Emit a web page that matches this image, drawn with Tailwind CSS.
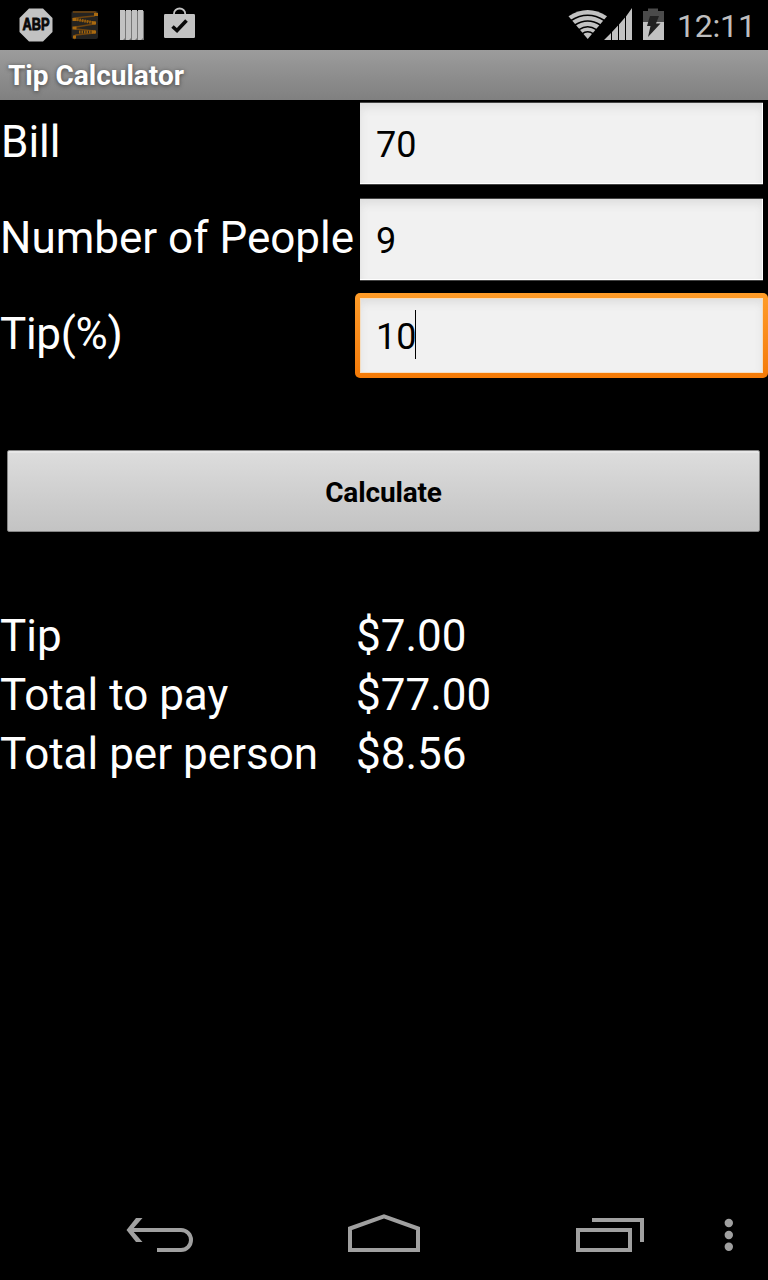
<!DOCTYPE html>
<html lang="en">
<head>
<meta charset="utf-8">
<title>Tip Calculator</title>
<script src="https://cdn.jsdelivr.net/npm/@tailwindcss/browser@4"></script>
</head>
<body class="bg-black">
<div class="flex h-[1280px] w-[768px] flex-col overflow-hidden bg-black font-['Roboto',sans-serif] text-white">
  <header class="h-[50px] shrink-0 flex">
    <svg class="h-[50px] w-[660px] shrink-0" viewBox="0 0 660 50" overflow="visible">
      <path d="M29 8.500H43L52.500 18V32L43 41.500H29L19.500 32V18Z" fill="#c2c2c2"/>
      <text x="36" y="30.300" text-anchor="middle" font-family="Liberation Sans, sans-serif" font-weight="bold" font-size="16" textLength="27" lengthAdjust="spacingAndGlyphs" fill="#080808" stroke="#080808" stroke-width=".9">ABP</text>
      <rect x="71.500" y="11" width="26.500" height="28" rx="2" fill="#242321"/>
      <g fill="none" stroke="#70450f" stroke-width="1.500">
        <path d="M73 12H95Q98 14 94 16L75 18Q71 19 76 20L94 22Q97 23 94 24L76 27Q71 28 76 29L94 31Q97 32 94 33L76 35Q73 36 75 39"/>
        <path d="M77 19.500L95 23M79 32L95 32" stroke="#99600e" stroke-width="3" stroke-dasharray="1.500 1"/>
        <path d="M94 14.500h4M72.500 19.500h4M92 23h4M72.500 28h4M92 32h4M73 37h3" stroke="#a96a10" stroke-width="3"/>
      </g>
      <g fill="#777"><path d="M121 11h5v29h-5zM127 11h5v29h-5zM133 11h5v29h-5zM139 11h5v29h-5z"/></g>
      <path d="M120 10h5v28l-2 2h-3zM126 10h5v28l-2 2h-3zM132 10h5v28l-2 2h-3zM138 10h5v28l-2 2h-3z" fill="#c2c2c2"/>
      <path d="M174 15V13.500a5.600 5 0 0 1 11.200 0V15" fill="none" stroke="#c2c2c2" stroke-width="1.800"/>
      <rect x="164" y="14" width="31" height="24" rx="1.200" fill="#c2c2c2"/>
      <path d="M172.500 26.500L177 30.500L186.500 20.500" fill="none" stroke="#080808" stroke-width="3.600"/>
      <path d="M568.500 16.300Q587.700 3.500 607 16.300L587.700 39Z" fill="#c2c2c2"/>
      <g fill="none" stroke="#000" stroke-width="1.500"><path d="M571 20.500Q587.700 9.800 604.400 20.500"/><path d="M575 25Q587.700 17 600.400 25"/><path d="M579 29.700Q587.700 24 596.400 29.700"/><path d="M582 33.800Q587.700 29.800 593.400 33.800"/></g>
      <path d="M604 40L611 33V40ZM612 32L618 25.500V40H612ZM619 24.500L625 17.500V40H619ZM626 16.500L632 8V40H626Z" fill="#c2c2c2"/>
      <path d="M643 11h5V8.500h10V11h6V22H643Z" fill="#4b4b4b"/>
      <path d="M643 22h21v18H643Z" fill="#c2c2c2"/>
      <path d="M650 16h9l-3 7.500h4.500L648 37l2.500-11H647Z" fill="#222"/>
    </svg>
    <div class="ml-[17px] h-[50px] whitespace-nowrap text-[32px] leading-[52px] tracking-[-0.2px] text-[#bebebe]">12:11</div>
  </header>
  <div class="h-[50px] shrink-0 bg-linear-to-b from-[#9c9c9c] to-[#808080] pl-2 text-[28px] leading-[51px] font-bold [text-shadow:0_1px_4px_#444]"><span>Tip Calculator</span></div>

  <main class="flex flex-1 flex-col">
    <div class="grid h-[290px] shrink-0 grid-cols-[355px_413px]">
      <div class="flex flex-col text-[44px] whitespace-nowrap">
        <div class="h-[90px] pl-px leading-[84px]">Bill</div>
        <div class="h-[96px] leading-[96px]">Number of People</div>
        <div class="h-[96px] leading-[96px] tracking-[-0.3px]">Tip(%)</div>
      </div>
      <div class="flex flex-col pt-[2px] text-[36px] text-black">
        <div class="mr-[5px] mb-[13px] ml-[5px] h-[83px] border-t border-b border-[#444] bg-[#f1f1f1] pl-[16px] leading-[85px] shadow-[inset_-1px_-1px_0_#fff,inset_0_5px_8px_#dedede]">70</div>
        <div class="mr-[5px] mb-[12px] ml-[5px] h-[83px] border-t border-b border-[#444] bg-[#f1f1f1] pl-[16px] leading-[85px] shadow-[inset_-1px_-1px_0_#fff,inset_0_5px_8px_#dedede]">9</div>
        <div class="h-[85px] rounded-[5px] bg-linear-to-b from-[#ff9c28] to-[#f47a06] p-[5px]">
          <div class="flex h-[75px] items-start bg-[#f1f1f1] pl-[16px] shadow-[inset_0_0_0_1px_#f5dec2,inset_0_5px_8px_#dedede]">
            <span class="leading-[78px]">10</span><span class="mt-[12px] -ml-px h-[49px] w-px bg-black"></span>
          </div>
        </div>
      </div>
    </div>
    <button class="mr-[8px] ml-[7px] mt-[60px] h-[82px] shrink-0 rounded-[2px] border border-[#858585] bg-linear-to-b from-[#dddddd] to-[#c3c3c3] pt-[3px] text-[28px] leading-[77px] font-bold tracking-[-0.15px] text-black shadow-[inset_0_2px_0_#e7e7e7]">Calculate</button>
    <div class="mt-[75px] grid grid-cols-[355px_1fr] text-[44px] leading-[59px] whitespace-nowrap">
      <span>Tip</span><span class="pl-px">$7.00</span>
      <span>Total to pay</span><span class="pl-px">$77.00</span>
      <span>Total per person</span><span class="pl-px">$8.56</span>
    </div>
  </main>

  <nav class="h-[96px] shrink-0">
    <svg class="h-[96px] w-[768px]" viewBox="0 1184 768 96" fill="none" stroke="#a0a0a0" stroke-width="4">
      <path d="M130 1230H181A10 10 0 0 1 181 1250H157"/><path d="M136 1218H142.500L132 1230L142.500 1242H136L126.500 1230Z" fill="#a0a0a0" stroke="none"/>
      <path d="M350 1228.500L384 1216.300L418 1228.500V1250H350Z"/>
      <path d="M578 1230H630V1250H578ZM592 1220H642V1242"/>
      <g fill="#a0a0a0" stroke="none"><circle cx="728.800" cy="1223" r="4.200"/><circle cx="728.800" cy="1235" r="4.200"/><circle cx="728.800" cy="1246.800" r="4.200"/></g>
    </svg>
  </nav>
</div>
</body>
</html>
